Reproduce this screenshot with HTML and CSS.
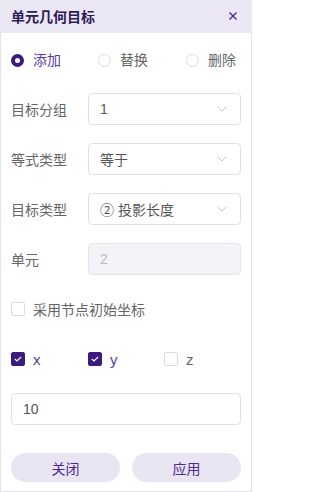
FILE: index.html
```html
<!DOCTYPE html>
<html>
<head>
<meta charset="utf-8">
<link rel="stylesheet" href="styles.css">
</head>
<body>
<div class="panel">
  <div class="header">
    <span class="title">单元几何目标</span>
    <svg class="close" width="10" height="10" viewBox="0 0 10 10"><path d="M1.5 1.5 L8.5 8.5 M8.5 1.5 L1.5 8.5" stroke="#4a2a8f" stroke-width="1.4" fill="none"/></svg>
  </div>
  <div class="body">
    <div class="radios">
      <label class="radio on"><span class="dot"></span>添加</label>
      <label class="radio"><span class="dot"></span>替换</label>
      <label class="radio"><span class="dot"></span>删除</label>
    </div>
    <div class="row first">
      <span class="label">目标分组</span>
      <div class="select"><span>1</span><svg width="10" height="6" viewBox="0 0 10 6"><path d="M0.5 0.5 L5 5 L9.5 0.5" stroke="#c9c8d2" stroke-width="1" fill="none"/></svg></div>
    </div>
    <div class="row">
      <span class="label">等式类型</span>
      <div class="select"><span>等于</span><svg width="10" height="6" viewBox="0 0 10 6"><path d="M0.5 0.5 L5 5 L9.5 0.5" stroke="#c9c8d2" stroke-width="1" fill="none"/></svg></div>
    </div>
    <div class="row">
      <span class="label">目标类型</span>
      <div class="select"><span>② 投影长度</span><svg width="10" height="6" viewBox="0 0 10 6"><path d="M0.5 0.5 L5 5 L9.5 0.5" stroke="#c9c8d2" stroke-width="1" fill="none"/></svg></div>
    </div>
    <div class="row">
      <span class="label">单元</span>
      <div class="select disabled"><span>2</span></div>
    </div>
    <label class="check single"><span class="box"></span>采用节点初始坐标</label>
    <div class="axes">
      <label class="check on"><span class="box"><svg width="8" height="6" viewBox="0 0 8 6"><path d="M0.8 3 L3 5 L7.2 0.8" stroke="#fff" stroke-width="1.2" fill="none"/></svg></span>x</label>
      <label class="check on"><span class="box"><svg width="8" height="6" viewBox="0 0 8 6"><path d="M0.8 3 L3 5 L7.2 0.8" stroke="#fff" stroke-width="1.2" fill="none"/></svg></span>y</label>
      <label class="check"><span class="box"></span>z</label>
    </div>
    <div class="input">10</div>
    <div class="buttons">
      <button class="btn">关闭</button>
      <button class="btn">应用</button>
    </div>
  </div>
</div>
</body>
</html>
```
FILE: styles.css
```css
* { box-sizing: border-box; }
html, body { margin: 0; padding: 0; background: #fff; }
body {
  font-family: "Liberation Sans", "Noto Sans CJK SC", sans-serif;
  font-size: 14px;
  color: #666;
}
.panel {
  width: 252px;
  height: 492px;
  border: 1px solid #e6e3ef;
  border-top: none;
  display: flex;
  flex-direction: column;
}
.header {
  height: 33px;
  margin: 0 -1px;
  background: #ebe7f4;
  display: flex;
  align-items: center;
  justify-content: space-between;
  padding: 0 14px 0 11px;
}
.title {
  font-weight: bold;
  font-size: 14px;
  color: #2b1c54;
  line-height: 1;
}
.close { display: block; margin-top: -2px; }
.body {
  padding: 17px 10px 9px 10px;
  display: flex;
  flex-direction: column;
}
.radios {
  height: 20px;
  display: flex;
  align-items: center;
}
.radio {
  display: flex;
  align-items: center;
  gap: 9px;
  line-height: 20px;
  color: #666;
}
.radio:nth-child(1) { width: 87px; }
.radio:nth-child(2) { width: 88px; }
.radio .dot {
  width: 13px;
  height: 13px;
  border-radius: 50%;
  border: 1px solid #dcdae4;
  background: #fff;
}
.radio.on { color: #5a3aa2; }
.radio.on .dot {
  border: 4px solid #3d1b7c;
  background: #fff;
}
.row {
  display: flex;
  align-items: center;
  height: 32px;
  margin-top: 18px;
}
.row.first { margin-top: 23px; }
.label {
  width: 77px;
  color: #666;
}
.select {
  width: 153px;
  height: 32px;
  border: 1px solid #e1dfe9;
  border-radius: 4px;
  display: flex;
  align-items: center;
  justify-content: space-between;
  padding: 0 13px 0 11px;
  color: #555;
}
.select.disabled {
  background: #f3f3f8;
  color: #b9b9c0;
  border-color: #e6e5ee;
}
.check {
  display: flex;
  align-items: center;
  gap: 8px;
  height: 20px;
  color: #666;
}
.check.single { margin-top: 24px; }
.check .box {
  width: 14px;
  height: 14px;
  border: 1px solid #dcdae4;
  border-radius: 2px;
  display: flex;
  align-items: center;
  justify-content: center;
}
.check.on { color: #5a3aa2; }
.check.on .box {
  background: #3d1b7c;
  border-color: #3d1b7c;
}
.axes {
  display: flex;
  margin-top: 30px;
  height: 20px;
  font-size: 15px;
}
.axes .check:nth-child(1) { width: 77px; }
.axes .check:nth-child(2) { width: 76px; }
.input {
  margin-top: 24px;
  height: 32px;
  border: 1px solid #e1dfe9;
  border-radius: 4px;
  display: flex;
  align-items: center;
  padding-left: 11px;
  color: #555;
}
.buttons {
  margin-top: 28px;
  display: flex;
  justify-content: space-between;
}
.btn {
  width: 109px;
  height: 29px;
  border: none;
  border-radius: 15px;
  background: #e9e5f3;
  color: #4b2a92;
  font-family: "Liberation Sans", "Noto Sans CJK SC", sans-serif;
  font-size: 14px;
  padding: 0;
}
```
